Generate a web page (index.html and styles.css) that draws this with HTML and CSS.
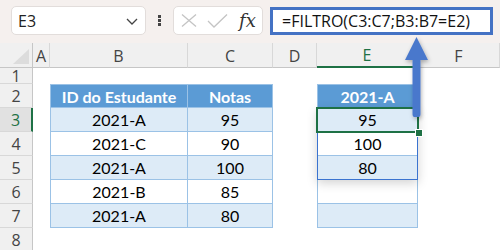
FILE: index.html
```html
<!DOCTYPE html>
<html lang="pt">
<head>
  <meta charset="UTF-8" />
  <title>FILTRO</title>
  <link rel="stylesheet" href="styles.css">
</head>
<body>
  <div class="toolbar">
    <div class="namebox">
      <span>E3</span>
      <svg class="chev" width="12" height="7" viewBox="0 0 12 7"><path d="M1 1 L6 6 L11 1" fill="none" stroke="#444" stroke-width="1.3"/></svg>
    </div>
    <div class="dots"><i></i><i></i><i></i></div>
    <div class="fxbox">
      <svg width="16" height="13" viewBox="0 0 16 13"><path d="M1 0.5 L15 12.5 M15 0.5 L1 12.5" stroke="#c4c4c4" stroke-width="1.3" fill="none"/></svg>
      <svg width="21" height="14" viewBox="0 0 21 14"><path d="M1 7 L7 13 L20 0.5" stroke="#c4c4c4" stroke-width="1.3" fill="none"/></svg>
      <span class="fx">fx</span>
    </div>
    <div class="formula">=FILTRO(C3:C7;B3:B7=E2)</div>
  </div>

  <div class="sheet">
    <div class="corner"><span class="tri"></span></div>
    <div class="ch">A</div>
    <div class="ch">B</div>
    <div class="ch">C</div>
    <div class="ch">D</div>
    <div class="ch active">E</div>
    <div class="ch">F</div>

    <div class="rh">1</div>
    <div></div><div></div><div></div><div></div><div></div><div></div>

    <div class="rh">2</div>
    <div></div>
    <div class="c th first">ID do Estudante</div>
    <div class="c th">Notas</div>
    <div></div>
    <div class="c th solo">2021-A</div>
    <div></div>

    <div class="rh active">3</div>
    <div></div>
    <div class="c band first">2021-A</div>
    <div class="c band">95</div>
    <div></div>
    <div class="c band spill">95</div>
    <div></div>

    <div class="rh">4</div>
    <div></div>
    <div class="c first">2021-C</div>
    <div class="c">90</div>
    <div></div>
    <div class="c spill">100</div>
    <div></div>

    <div class="rh">5</div>
    <div></div>
    <div class="c band first">2021-A</div>
    <div class="c band">100</div>
    <div></div>
    <div class="c band spill">80</div>
    <div></div>

    <div class="rh">6</div>
    <div></div>
    <div class="c first">2021-B</div>
    <div class="c">85</div>
    <div></div>
    <div class="c solo"></div>
    <div></div>

    <div class="rh">7</div>
    <div></div>
    <div class="c band first">2021-A</div>
    <div class="c band">80</div>
    <div></div>
    <div class="c band solo"></div>
    <div></div>

    <div class="rh">8</div>
    <div></div><div></div><div></div><div></div><div></div><div></div>

    <div class="spill-frame"></div>
    <div class="selection"></div>
    <div class="handle"></div>
  </div>

  <svg class="arrow" width="40" height="90" viewBox="0 0 40 90">
    <defs>
      <filter id="sh" x="-50%" y="-20%" width="200%" height="150%">
        <feDropShadow dx="1" dy="2" stdDeviation="2" flood-color="#000" flood-opacity="0.3"/>
      </filter>
    </defs>
    <path d="M16.5 2 L28 25 L20.5 25 L20.5 79 Q20.5 82 18.5 82 L14.5 82 Q12.5 82 12.5 79 L12.5 25 L5 25 Z" fill="#4a78cc" filter="url(#sh)"/>
  </svg>
</body>
</html>
```

FILE: styles.css
```css
body {
  margin: 0;
  width: 500px;
  height: 250px;
  overflow: hidden;
  background: #fff;
  font-family: 'Open Sans', sans-serif;
  position: relative;
}
.toolbar {
  height: 43px;
  background: #f5f0ee;
  display: flex;
  align-items: flex-start;
  padding-top: 6px;
  box-sizing: border-box;
}
.namebox {
  margin-left: 11px;
  width: 135px;
  height: 29px;
  box-sizing: border-box;
  background: #fff;
  border: 1px solid #e2dddb;
  border-radius: 5px;
  display: flex;
  align-items: center;
  justify-content: space-between;
  padding: 0 7px 0 6px;
  font-size: 16px;
  color: #222;
}
.chev {
  margin-top: 2px;
}
.dots {
  width: 27px;
  height: 29px;
  display: flex;
  flex-direction: column;
  align-items: center;
  justify-content: center;
  gap: 1px;
}
.dots i {
  width: 3px;
  height: 3px;
  background: #444;
}
.fxbox {
  width: 90px;
  height: 29px;
  box-sizing: border-box;
  background: #fff;
  border: 1px solid #e2dddb;
  border-radius: 5px;
  display: flex;
  align-items: center;
  padding-left: 7px;
  gap: 10px;
}
.fx {
  font-family: 'DejaVu Serif', serif;
  font-style: italic;
  font-size: 18px;
  color: #333;
  margin-left: 1px;
}
.formula {
  margin-left: 7px;
  margin-top: 1px;
  width: 223px;
  height: 28px;
  box-sizing: border-box;
  border: 3px solid #4472c4;
  background: #fff;
  font-size: 16px;
  line-height: 22px;
  padding-left: 9px;
  color: #111;
  white-space: nowrap;
}
.sheet {
  display: grid;
  grid-template-columns: 33px 17px 138px 85px 44px 101px 82px;
  grid-template-rows: 25px 16px repeat(7, 24px);
  position: relative;
  font-family: 'Lato', sans-serif;
  font-size: 16px;
}
.corner {
  background: #f0f0f0;
  border-right: 1px solid #c6c6c6;
  border-bottom: 1px solid #c6c6c6;
  position: relative;
}
.tri {
  position: absolute;
  right: 3px;
  bottom: 3px;
  width: 0;
  height: 0;
  border-left: 16px solid transparent;
  border-bottom: 15px solid #dcdcdc;
}
.ch {
  background: #f0f0f0;
  border-right: 1px solid #d8d8d8;
  border-bottom: 1px solid #c6c6c6;
  display: flex;
  align-items: center;
  justify-content: center;
  font-family: 'Open Sans', sans-serif;
  font-size: 16px;
  color: #444;
  padding-top: 1px;
}
.ch.active {
  color: #1e7145;
  border-bottom: 2px solid #1e7145;
}
.rh {
  background: #f0f0f0;
  border-right: 1px solid #c6c6c6;
  border-bottom: 1px solid #d8d8d8;
  display: flex;
  align-items: center;
  justify-content: center;
  font-family: 'Open Sans', sans-serif;
  font-size: 16px;
  color: #444;
}
.rh.active {
  background: #e1e1e1;
  color: #1e7145;
  border-right: 2px solid #1e7145;
}
.c {
  display: flex;
  align-items: center;
  justify-content: center;
  color: #000;
  border-right: 1px solid #9bc2e6;
  border-bottom: 1px solid #9bc2e6;
  box-sizing: border-box;
}
.c.first, .c.solo {
  border-left: 1px solid #9bc2e6;
}
.th {
  background: #5b9bd5;
  color: #fff;
  font-weight: bold;
  border-top: 1px solid #9bc2e6;
}
.band {
  background: #ddebf7;
}
.spill {
  border-left: 1px solid #3a73d0;
  border-right: 1px solid #3a73d0;
  border-bottom: 1px solid #9bc2e6;
}
.spill-frame {
  position: absolute;
  left: 317px;
  top: 65px;
  width: 101px;
  height: 72px;
  box-sizing: border-box;
  border: 1px solid #3a73d0;
  box-shadow: 0 3px 10px rgba(0, 0, 0, 0.18);
}
.selection {
  position: absolute;
  left: 316px;
  top: 64px;
  width: 103px;
  height: 26px;
  box-sizing: border-box;
  border: 2px solid #1e7145;
}
.handle {
  position: absolute;
  left: 415px;
  top: 86px;
  width: 6px;
  height: 6px;
  background: #1e7145;
  border: 1px solid #fff;
}
.arrow {
  position: absolute;
  left: 400px;
  top: 35px;
}
```
